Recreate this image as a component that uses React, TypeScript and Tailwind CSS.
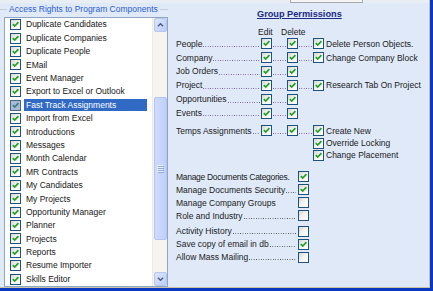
import React from "react";

const items = [
  "Duplicate Candidates",
  "Duplicate Companies",
  "Duplicate People",
  "EMail",
  "Event Manager",
  "Export to Excel or Outlook",
  "Fast Track Assignments",
  "Import from Excel",
  "Introductions",
  "Messages",
  "Month Calendar",
  "MR Contracts",
  "My Candidates",
  "My Projects",
  "Opportunity Manager",
  "Planner",
  "Projects",
  "Reports",
  "Resume Importer",
  "Skills Editor",
];

function Box({ on = true, sel = false }: { on?: boolean; sel?: boolean }) {
  return (
    <span
      className={
        sel
          ? "relative shrink-0 w-[11px] h-[11px] border border-[#45658f] bg-[#a7bbd6]"
          : "relative shrink-0 w-[11px] h-[11px] border border-[#1c5180] bg-gradient-to-br from-[#d6d6d0] via-[#f4f4f1] to-white"
      }
    >
      {on && (
        <svg viewBox="0 0 9 9" className="absolute left-0 top-0 w-[9px] h-[9px]">
          <path
            d="M1.8 4.1 L3.7 6.1 L7.4 2.2"
            fill="none"
            stroke={sel ? "#3a7c84" : "#21a121"}
            strokeWidth="1.7"
          />
        </svg>
      )}
    </span>
  );
}

function Leader({ dark = false }: { dark?: boolean }) {
  return (
    <div
      className={
        dark
          ? "flex-1 min-w-0 h-px mt-[5px] ml-[1px] bg-[linear-gradient(to_right,#4a4a4a_1px,transparent_1px)] bg-[length:2.4px_1px]"
          : "flex-1 min-w-0 h-px mt-[5px] ml-[1px] bg-[linear-gradient(to_right,#7b4a9b_1px,transparent_1px)] bg-[length:2.4px_1px]"
      }
    />
  );
}

function PermRow({ label, third, tall = true }: { label: string; third?: string; tall?: boolean }) {
  return (
    <div className={tall ? "flex items-center h-[13.9px]" : "flex items-center h-[12.25px]"}>
      <div className="w-[85px] flex items-center pr-[1px]">
        <span className="shrink-0 whitespace-nowrap">{label}</span>
        <Leader />
      </div>
      <Box />
      <div className="w-[15px] flex items-center pr-[1px]">
        <Leader />
      </div>
      <Box />
      {third && (
        <>
          <div className="w-[15px] flex items-center pr-[1px]">
            <Leader />
          </div>
          <Box />
          <span className="ml-[2px] whitespace-nowrap">{third}</span>
        </>
      )}
    </div>
  );
}

function SubRow({ label }: { label: string }) {
  return (
    <div className="flex items-center h-[12.25px] pl-[137px]">
      <Box />
      <span className="ml-[2px] whitespace-nowrap">{label}</span>
    </div>
  );
}

function BottomRow({
  label,
  on,
  dots = true,
  tight = false,
}: {
  label: string;
  on: boolean;
  dots?: boolean;
  tight?: boolean;
}) {
  return (
    <div className="flex items-center h-[13px]">
      <div className="w-[122px] flex items-center pr-[2px]">
        <span className={tight ? "shrink-0 whitespace-nowrap tracking-[-0.3px]" : "shrink-0 whitespace-nowrap"}>
          {label}
        </span>
        {dots && <Leader dark />}
      </div>
      <Box on={on} />
    </div>
  );
}

function Chevron({ up }: { up: boolean }) {
  return (
    <svg viewBox="0 0 13 14" className="w-[13px] h-[14px]">
      <path
        d={up ? "M3.5 8.5 L6.5 5.5 L9.5 8.5" : "M3.5 5.5 L6.5 8.5 L9.5 5.5"}
        fill="none"
        stroke="#4d6185"
        strokeWidth="1.7"
      />
    </svg>
  );
}

function ScrollBar() {
  return (
    <div className="w-[15px] flex flex-col bg-[#f5f4ef] border-l border-[#ecebe4]">
      <div className="ml-[1px] w-[13px] h-[14px] rounded-[2px] border border-[#b5c8f3] bg-gradient-to-br from-[#dbe6fd] to-[#bccef8] flex items-center justify-center">
        <Chevron up />
      </div>
      <div className="h-[65px]" />
      <div className="ml-[1px] w-[13px] h-[143px] rounded-[2px] border border-[#b2c5f2] bg-gradient-to-r from-[#cddbfd] to-[#bfd0f9] flex items-center justify-center">
        <svg viewBox="0 0 7 8" className="w-[7px] h-[8px]">
          <path d="M0 0.5 H6 M0 2.5 H6 M0 4.5 H6 M0 6.5 H6" stroke="#eef3ff" strokeWidth="1" />
          <path d="M1 1.5 H7 M1 3.5 H7 M1 5.5 H7 M1 7.5 H7" stroke="#90a8dc" strokeWidth="1" />
        </svg>
      </div>
      <div className="flex-1" />
      <div className="ml-[1px] w-[13px] h-[14px] rounded-[2px] border border-[#b5c8f3] bg-gradient-to-br from-[#dbe6fd] to-[#bccef8] flex items-center justify-center">
        <Chevron up={false} />
      </div>
    </div>
  );
}

export default function App() {
  return (
    <div className="w-[433px] h-[291px] bg-[#0b38c0] overflow-hidden font-['Liberation_Sans',Arial,sans-serif] text-[8.5px] leading-none text-[#1a1a1a]">
      <div className="w-[430px] h-[288px] bg-[#dfe9f8] border-r border-b border-[#c9c1a3] flex flex-col">
        {/* top strip */}
        <div className="h-[3px] bg-[#e9eef5] flex">
          <div className="ml-[290px] w-[73px] h-[3px] border-x border-b border-[#a9a9ad] bg-[#f4f4f4]" />
        </div>
        <div className="flex h-[284px]">
          {/* left group */}
          <div className="w-[168px] flex flex-col">
            <div className="h-[12px] flex items-center">
              <div className="w-[7px] h-px bg-[#c3cfdd]" />
              <span className="px-[2px] text-[#2c5ed2] whitespace-nowrap">Access Rights to Program Components</span>
              <div className="flex-1 h-px bg-[#c3cfdd]" />
            </div>
            <div className="mt-[2px] ml-[4px] w-[164px] h-[270px] border border-[#8ea6c4] bg-white flex">
              <div className="flex-1 flex flex-col">
                {items.map((it) => {
                  const sel = it === "Fast Track Assignments";
                  return (
                    <div key={it} className="h-[13.4px] flex items-center pl-[5px]">
                      <Box sel={sel} />
                      <span
                        className={
                          sel
                            ? "ml-[3px] mr-[5px] flex-1 h-[12.5px] flex items-center px-[2px] bg-[#316ac5] text-white whitespace-nowrap"
                            : "ml-[3px] mr-[5px] flex-1 h-[12.5px] flex items-center px-[2px] whitespace-nowrap text-[#161616]"
                        }
                      >
                        {it}
                      </span>
                    </div>
                  );
                })}
              </div>
              <ScrollBar />
            </div>
          </div>

          {/* right panel */}
          <div className="flex-1 flex flex-col pl-[8px]">
            <div className="h-[24px] flex items-center">
              <span className="ml-[81px] text-[9.2px] font-bold underline text-[#1b2a84] whitespace-nowrap">
                Group Permissions
              </span>
            </div>
            <div className="h-[10px] flex items-center">
              <span className="ml-[82px] w-[23px]">Edit</span>
              <span>Delete</span>
            </div>
            <PermRow label="People" third="Delete Person Objects." />
            <PermRow label="Company" third="Change Company Block" />
            <PermRow label="Job Orders" />
            <PermRow label="Project" third="Research Tab On Project" />
            <PermRow label="Opportunities" />
            <PermRow label="Events" />
            <div className="mt-[4.5px]">
              <PermRow label="Temps Assignments" third="Create New" tall={false} />
              <SubRow label="Override Locking" />
              <SubRow label="Change Placement" />
            </div>
            <div className="mt-[8.85px]">
              <BottomRow label="Manage Documents Categories." on dots={false} tight />
              <BottomRow label="Manage Documents Security" on />
              <BottomRow label="Manage Company Groups" on={false} dots={false} />
              <BottomRow label="Role and Industry" on={false} />
            </div>
            <div className="mt-[2.5px]">
              <BottomRow label="Activity History" on={false} />
              <BottomRow label="Save copy of email in db" on />
              <BottomRow label="Allow Mass Mailing" on={false} />
            </div>
          </div>
        </div>
      </div>
    </div>
  );
}
